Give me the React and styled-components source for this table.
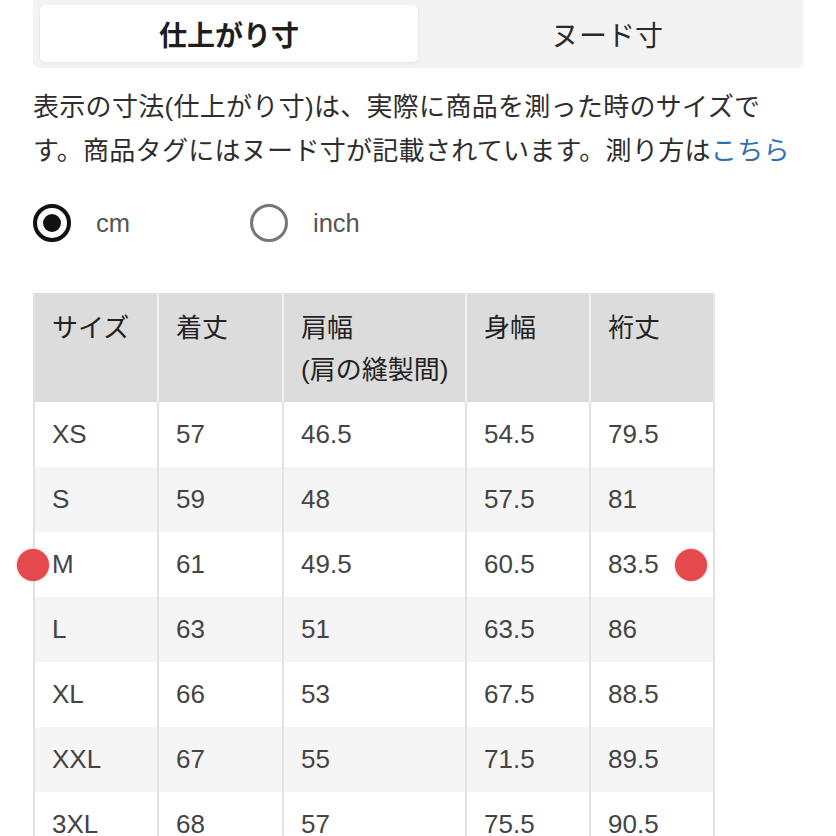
import React from "react";
import styled, { createGlobalStyle } from "styled-components";

const Global = createGlobalStyle`
  html, body { margin: 0; padding: 0; background: #fff; }
  body {
    font-family: "Liberation Sans", "Noto Sans CJK JP", sans-serif;
    color: #333;
  }
`;

const Page = styled.div`
  width: 836px;
  height: 836px;
  overflow: hidden;
  padding-left: 33px;
  box-sizing: border-box;
`;

const Tabs = styled.div`
  display: flex;
  width: 770px;
  height: 68px;
  box-sizing: border-box;
  padding: 5px 7px 6px;
  background: #f3f3f3;
  border-radius: 0 0 6px 6px;
`;

const Tab = styled.div`
  flex: 1;
  display: flex;
  align-items: center;
  justify-content: center;
  font-size: 28px;
  font-weight: ${(p) => (p.$active ? 700 : 400)};
  color: ${(p) => (p.$active ? "#1e1e1e" : "#2a2a2a")};
  background: ${(p) => (p.$active ? "#fff" : "transparent")};
  border-radius: 5px;
  box-shadow: ${(p) => (p.$active ? "0 1px 3px rgba(0,0,0,0.08)" : "none")};
`;

const Desc = styled.p`
  width: 772px;
  margin: 17px 0 0;
  font-size: 26px;
  line-height: 44px;
  color: #2e2e2e;
  letter-spacing: 0.3px;
`;

const Link = styled.a`
  color: #2f6fb8;
  text-decoration: none;
  white-space: nowrap;
`;

const Units = styled.div`
  display: flex;
  align-items: center;
  margin-top: 31px;
  height: 38px;
`;

const Option = styled.label`
  display: flex;
  align-items: center;
  width: 217px;
  gap: 25px;
  font-size: 25.5px;
  color: #555;
`;

const Radio = styled.span`
  width: 38px;
  height: 38px;
  box-sizing: border-box;
  border-radius: 50%;
  border: ${(p) => (p.$checked ? "4px solid #111" : "3.5px solid #777")};
  display: flex;
  align-items: center;
  justify-content: center;
  &::after {
    content: "";
    display: ${(p) => (p.$checked ? "block" : "none")};
    width: 18px;
    height: 18px;
    border-radius: 50%;
    background: #111;
  }
`;

const Table = styled.table`
  margin-top: 51px;
  width: 682px;
  table-layout: fixed;
  border-collapse: separate;
  border-spacing: 0;
  border-left: 2px solid #e2e2e2;
  font-size: 26px;
`;

const HeadCell = styled.th`
  height: 109px;
  box-sizing: border-box;
  vertical-align: top;
  text-align: left;
  font-weight: 400;
  color: #222;
  line-height: 42px;
  padding: 14px 6px 0 17px;
  background: #dcdcdc;
  border-right: 2px solid #f2f2f2;
  white-space: nowrap;
  &:last-child { border-right: 2px solid #e6e6e6; }
`;

const Row = styled.tr`
  background: ${(p) => (p.$alt ? "#f5f5f5" : "#fff")};
`;

const Cell = styled.td`
  position: relative;
  height: 65px;
  padding: 0 6px 0 17px;
  color: #444;
  border-right: 2px solid #e2e2e2;
  vertical-align: middle;
`;

const Dot = styled.span`
  position: absolute;
  top: 50%;
  left: ${(p) => p.$left}px;
  width: 32px;
  height: 32px;
  margin-top: -16px;
  border-radius: 50%;
  background: #e5484d;
  box-shadow: 0 0 2px rgba(229, 72, 77, 0.6);
`;

const cols = [124, 125, 183, 124, 124];
const head = [["サイズ"], ["着丈"], ["肩幅", "(肩の縫製間)"], ["身幅"], ["裄丈"]];
const rows = [
  ["XS", "57", "46.5", "54.5", "79.5"],
  ["S", "59", "48", "57.5", "81"],
  ["M", "61", "49.5", "60.5", "83.5"],
  ["L", "63", "51", "63.5", "86"],
  ["XL", "66", "53", "67.5", "88.5"],
  ["XXL", "67", "55", "71.5", "89.5"],
  ["3XL", "68", "57", "75.5", "90.5"],
];

export default function App() {
  return (
    <Page>
      <Global />
      <Tabs>
        <Tab $active>仕上がり寸</Tab>
        <Tab>ヌード寸</Tab>
      </Tabs>
      <Desc>
        表示の寸法(仕上がり寸)は、実際に商品を測った時のサイズです。商品タグにはヌード寸が記載されています。測り方は
        <Link>こちら</Link>
      </Desc>
      <Units>
        <Option>
          <Radio $checked />
          cm
        </Option>
        <Option>
          <Radio />
          inch
        </Option>
      </Units>
      <Table>
        <colgroup>
          {cols.map((w, i) => (
            <col key={i} style={{ width: w }} />
          ))}
        </colgroup>
        <thead>
          <tr>
            {head.map((h, i) => (
              <HeadCell key={i}>
                {h.map((line, j) => (
                  <div key={j}>{line}</div>
                ))}
              </HeadCell>
            ))}
          </tr>
        </thead>
        <tbody>
          {rows.map((r, i) => (
            <Row key={r[0]} $alt={i % 2 === 1}>
              {r.map((v, j) => (
                <Cell key={j}>
                  {r[0] === "M" && j === 0 && <Dot $left={-18} />}
                  {v}
                  {r[0] === "M" && j === 4 && <Dot $left={84} />}
                </Cell>
              ))}
            </Row>
          ))}
        </tbody>
      </Table>
    </Page>
  );
}
